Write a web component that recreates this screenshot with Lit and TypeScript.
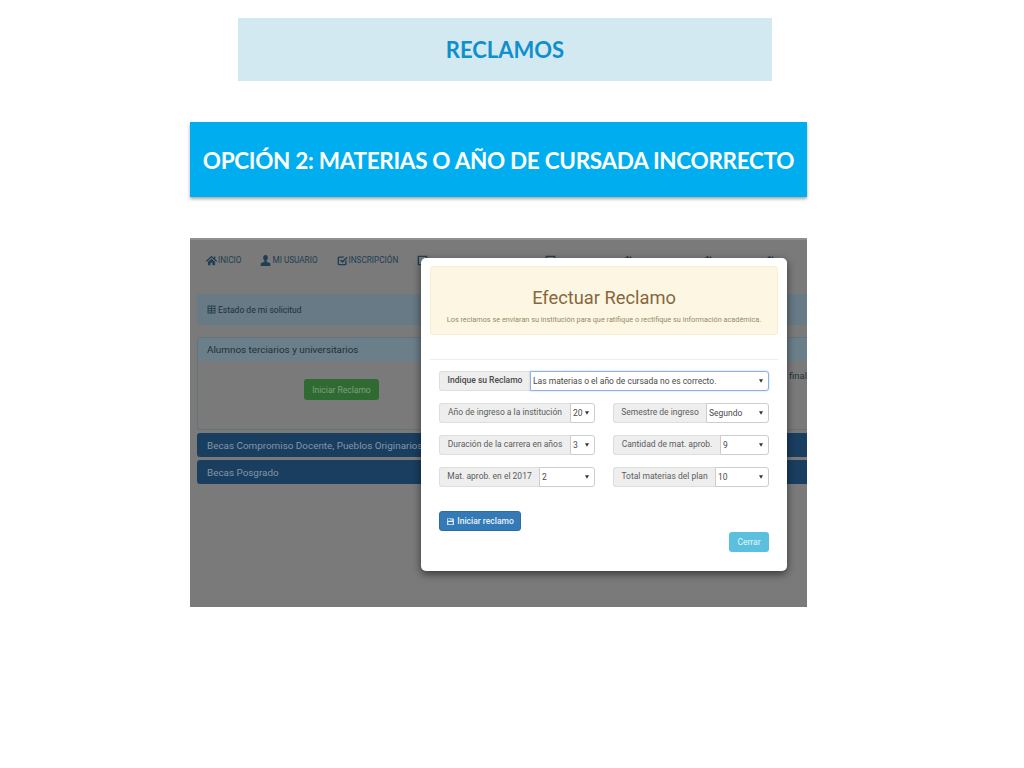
import { LitElement, html, css } from "lit";
import { customElement } from "lit/decorators.js";

const caret = html`<svg class="caret" viewBox="0 0 6 5"><path d="M0 0H6L3 5Z" fill="currentColor"/></svg>`;

const field = (label: string, value: string, selW: number) => html`
  <div class="group">
    <span class="addon">${label}</span>
    <span class="select" style="width:${selW}px">${value}${caret}</span>
  </div>`;

const icon = (d: string) => html`<svg class="navicon" viewBox="0 0 16 16"><path d=${d} fill="currentColor" fill-rule="evenodd"/></svg>`;
const HOME = "M8 1 0 8.5 1 10 8 3.6 15 10l1-1.5-2.5-2.4V2h-2v2.2zM2.8 10.2V15h3.7v-3.6h3V15h3.7v-4.8L8 5.4z";
const USER = "M8 0C5.7 0 4.6 1.8 4.6 4c0 1.7.7 3.2 1.8 4v1.8L1 12v4h14v-4L9.6 9.8V8c1.1-.8 1.8-2.3 1.8-4 0-2.2-1.1-4-3.4-4z";
const CHECK = "M3 2h8l-2 2H3.5a.5.5 0 0 0-.5.5v8c0 .3.2.5.5.5h8c.3 0 .5-.2.5-.5V9l2-2v6a2 2 0 0 1-2 2H3a2 2 0 0 1-2-2V4a2 2 0 0 1 2-2zm11 .5L15.5 4 8 11.5 4.5 8 6 6.5l2 2z";
const SAVE = "M2 2h10l2 2v10H2zm1.2 1.2v3.6h8V3.2h-1.6v2.4H8V3.2zM4 9v3.8h8V9z";
const TABLE = "M1 1h14v14H1zm1.5 1.5v3h4.5v-3zm6 0v3h5v-3zm-6 4.5v2.5h4.5V7zm6 0v2.5h5V7zm-6 4v2.5h4.5V11zm6 0v2.5h5V11z";
const SQUARE = "M1 1h14v14H1zm2 2v10h10V3z";

@customElement("app-root")
export class AppRoot extends LitElement {
  static styles = css`
    :host { display: block; width: 1024px; height: 768px; background: #fff; overflow: hidden; font-family: Roboto, "Liberation Sans", sans-serif; }
    .slide { display: flex; flex-direction: column; align-items: flex-start; padding: 18px 0 0 190px; }
    .banner { width: 534px; height: 63px; margin-left: 48px; background: #d2e9f2; color: #0f8fcc; display: flex; align-items: center; justify-content: center;
      font: 700 22px Lato, "Open Sans", sans-serif; }
    .option { width: 617px; height: 75px; box-sizing: border-box; padding-top: 2px; margin: 41px 0; background: #00aeef; color: #fff; box-shadow: 0 2px 3px rgba(0,0,0,.35); display: flex; align-items: center; justify-content: center;
      font: 700 22.5px Lato, "Open Sans", sans-serif; letter-spacing: -.3px; white-space: nowrap; }
    .shot { position: relative; width: 617px; height: 369px; background: #7a7a7a; overflow: hidden; }
    .under { padding-left: 7px; display: flex; flex-direction: column; height: 100%; box-sizing: border-box; }
    .topedge { position: absolute; left: 0; right: 0; top: 0; height: 2px; background: #909090; }
    .nav { display: flex; align-items: center; height: 44px; padding-left: 9px; gap: 19px; color: #203f55; font-size: 8.2px; white-space: nowrap; }
    .nav span { display: inline-flex; align-items: center; gap: 1px; }
    .navicon { width: 11px; height: 11px; flex: none; }
    .covered { display: flex; }
    .covered .navicon { margin-right: 117px; }
    .covered .navicon:nth-child(2) { margin-right: 66px; }
    .covered .navicon:nth-child(3) { margin-right: 69px; }
    .covered .navicon:nth-child(4) { margin-right: 51px; }
    .state { margin-top: 12px; height: 31px; display: flex; align-items: center; gap: 2px; padding-left: 10px; background: #677a85; border-radius: 3px 0 0 3px; color: #1c303b; font-size: 8.5px; }
    .state svg { width: 9px; height: 9px; color: #263f4d; }
    .panel { margin-top: 12px; height: 93px; border: 1px solid #66727a; border-right: 0; border-radius: 3px 0 0 3px; box-sizing: border-box; }
    .panel h4 { margin: 0; height: 23px; display: flex; align-items: center; padding-left: 9px; background: #6a7f8a; color: #1c303b; font-size: 9.9px; font-weight: 400; }
    .panel .body { position: relative; display: flex; padding: 18px 0 0 106px; }
    .green { width: 75px; height: 21px; background: #2f6a32; border-radius: 3px; color: #7f9f7f; font-size: 8.5px; display: flex; align-items: center; justify-content: center; }
    .final { position: absolute; right: 0; top: 9px; color: #24343c; font-size: 9.5px; }
    .bar { height: 24px; margin-top: 3px; display: flex; align-items: center; padding-left: 10px; background: #1a3e60; color: #8296a8; border-radius: 3px 0 0 3px; font-size: 9.9px; white-space: nowrap; }
    .modal { position: absolute; left: 231px; top: 20px; width: 366px; height: 313px; box-sizing: border-box; padding: 8px 9px 0; background: #fff; border-radius: 5px; box-shadow: 0 3px 8px rgba(0,0,0,.55); display: flex; flex-direction: column; }
    .alert { height: 69px; box-sizing: border-box; background: #fcf6e3; border: 1px solid #f6edd2; border-radius: 3px; color: #85683f; text-align: center; display: flex; flex-direction: column; align-items: center; }
    .alert h3 { margin: 21px 0 0; font-size: 18.3px; font-weight: 400; line-height: 20px; }
    .alert p { margin: 7px 0 0; font-size: 7.3px; line-height: 10px; color: #978a6c; white-space: nowrap; }
    hr { width: 100%; margin: 24px 0 0; border: 0; border-top: 1px solid #eee; }
    .form { padding: 11px 9px 0; display: flex; flex-direction: column; gap: 12px; }
    .row { display: flex; justify-content: space-between; }
    .half { width: 156px; }
    .wide { width: 330px; }
    .group { display: flex; height: 20px; font-size: 8.5px; color: #5c5c5c; }
    .addon { flex: 1; box-sizing: border-box; display: flex; align-items: center; justify-content: center; background: #eee; border: 1px solid #ddd; border-right: 0; border-radius: 3px 0 0 3px; white-space: nowrap; padding-bottom: 2px; }
    .select { box-sizing: border-box; display: flex; align-items: center; justify-content: space-between; padding: 0 5px 0 2px; background: #fff; border: 1px solid #ccc; border-radius: 0 3px 3px 0; color: #4a4a4a; font-size: 8.5px; }
    .caret { width: 4px; height: 4px; color: #333; flex: none; }
    .wide .addon { font-weight: 500; color: #4a4a4a; }
    .wide .select { border-color: #8fb2dc; box-shadow: 0 0 2px rgba(102,150,230,.5); }
    .actions { padding: 0 9px; display: flex; flex-direction: column; }
    .save { margin-top: 24px; width: 82px; height: 20px; background: #337ab7; border: 1px solid #2e6da4; box-sizing: border-box; border-radius: 3px; color: #e9f1f8; font-size: 8.5px; font-weight: 500; display: flex; align-items: center; justify-content: center; gap: 2px; }
    .save svg { width: 9px; height: 9px; }
    .close { align-self: flex-end; margin-top: 1px; width: 40px; height: 20px; background: #5bc0de; border-radius: 3px; color: #e6f6fb; font-size: 8.5px; display: flex; align-items: center; justify-content: center; }
  `;

  render() {
    return html`
      <div class="slide">
        <div class="banner">RECLAMOS</div>
        <div class="option">OPCIÓN 2: MATERIAS O AÑO DE CURSADA INCORRECTO</div>
        <div class="shot">
          <div class="under">
            <div class="nav">
              <span>${icon(HOME)}INICIO</span>
              <span>${icon(USER)}MI USUARIO</span>
              <span>${icon(CHECK)}INSCRIPCIÓN</span>
              <div class="covered">
                ${icon(SQUARE)}${icon(SQUARE)}${icon(HOME)}${icon(HOME)}${icon(HOME)}
              </div>
            </div>
            <div class="state">${icon(TABLE)}Estado de mi solicitud</div>
            <div class="panel">
              <h4>Alumnos terciarios y universitarios</h4>
              <div class="body"><div class="green">Iniciar Reclamo</div><span class="final">final</span></div>
            </div>
            <div class="bar">Becas Compromiso Docente, Pueblos Originarios</div>
            <div class="bar">Becas Posgrado</div>
          </div>
          <div class="topedge"></div>
          <div class="modal">
            <div class="alert">
              <h3>Efectuar Reclamo</h3>
              <p>Los reclamos se enviaran su institución para que ratifique o rectifique su información académica.</p>
            </div>
            <hr />
            <div class="form">
              <div class="wide">${field("Indique su Reclamo", "Las materias o el año de cursada no es correcto.", 239)}</div>
              <div class="row">
                <div class="half">${field("Año de ingreso a la institución", "20", 25)}</div>
                <div class="half">${field("Semestre de ingreso", "Segundo", 63)}</div>
              </div>
              <div class="row">
                <div class="half">${field("Duración de la carrera en años", "3", 25)}</div>
                <div class="half">${field("Cantidad de mat. aprob.", "9", 49)}</div>
              </div>
              <div class="row">
                <div class="half">${field("Mat. aprob. en el 2017", "2", 56)}</div>
                <div class="half">${field("Total materias del plan", "10", 54)}</div>
              </div>
            </div>
            <div class="actions">
              <div class="save"><svg viewBox="0 0 16 16"><path d=${SAVE} fill="currentColor" fill-rule="evenodd"/></svg>Iniciar reclamo</div>
              <div class="close">Cerrar</div>
            </div>
          </div>
        </div>
      </div>
    `;
  }
}
